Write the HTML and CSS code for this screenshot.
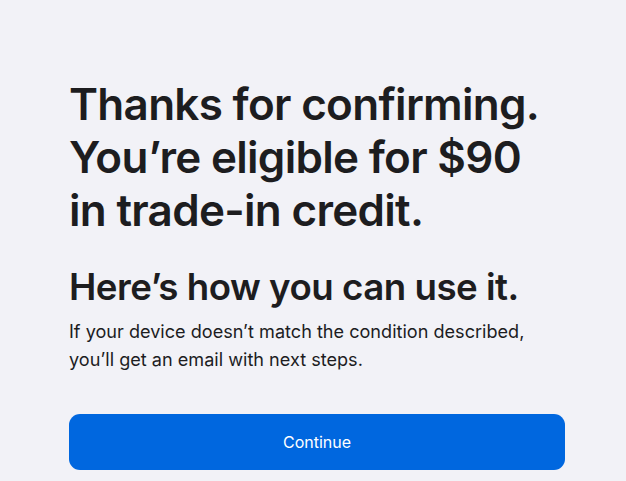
FILE: index.html
```
<!DOCTYPE html>
<html>
<head>
<meta charset="utf-8">
<link rel="stylesheet" href="styles.css">
</head>
<body>
<main class="page">
  <h1 class="title">Thanks for confirming.<br>You’re eligible for $90<br>in trade-in credit.</h1>
  <h2 class="subtitle">Here’s how you can use it.</h2>
  <p class="body">If your device doesn’t match the condition described,<br>you’ll get an email with next steps.</p>
  <button class="cta">Continue</button>
</main>
</body>
</html>
```
FILE: styles.css
```
html, body {
  margin: 0;
  background: #f2f2f7;
}
.page {
  font-family: Inter, "Noto Sans", sans-serif;
  color: #1d1d1f;
  padding: 78px 61px 0 69px;
  display: flex;
  flex-direction: column;
  white-space: nowrap;
}
.title {
  margin: 0;
  font-size: 44px;
  font-weight: 600;
  line-height: 53px;
  letter-spacing: -0.7px;
}
.subtitle {
  margin: 28px 0 0;
  font-size: 36.7px;
  font-weight: 600;
  line-height: 44px;
  letter-spacing: -0.5px;
}
.body {
  margin: 8px 0 0;
  font-size: 18.1px;
  line-height: 28px;
}
.cta {
  margin-top: 41px;
  height: 56px;
  border: none;
  border-radius: 11px;
  background: #0067df;
  color: #fff;
  font-family: Inter, "Noto Sans", sans-serif;
  font-size: 16px;
}
```
